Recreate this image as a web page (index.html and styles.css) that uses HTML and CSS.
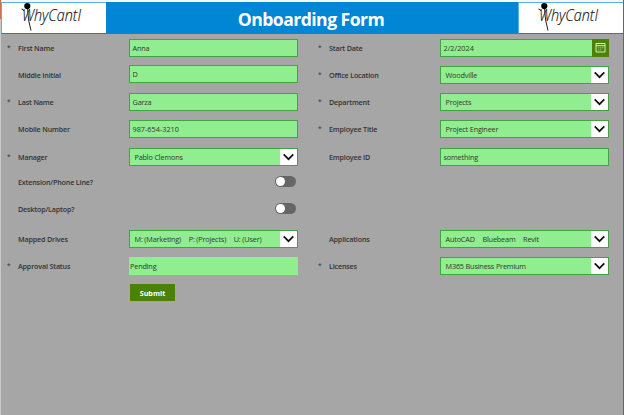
FILE: index.html
```html
<!DOCTYPE html>
<html lang="en">
<head>
<meta charset="utf-8">
<title>Onboarding Form</title>
<link rel="stylesheet" href="styles.css">
</head>
<body>
<svg width="0" height="0" class="defs" aria-hidden="true">
  <symbol id="chevron" viewBox="0 0 16 16"><path d="M3.2 5.4 8 10.2l4.8-4.8" fill="none" stroke="#111" stroke-width="1.7"/></symbol>
  <symbol id="logo" viewBox="0 0 104 30" overflow="visible">
    <circle cx="25.3" cy="3.1" r="3.1" fill="#000"/>
    <path d="M25.6 6Q25.8 17 29 27.6M19.5 6q2 .3 2.6 2" fill="none" stroke="#222" stroke-width="1"/>
    <text x="20" y="18.2" font-size="16.5" textLength="59" lengthAdjust="spacingAndGlyphs" class="wordmark">WhyCantI</text>
  </symbol>
</svg>
<header class="header">
  <div class="brand"><svg width="104" height="30"><use href="#logo"/></svg></div>
  <h1 class="title">Onboarding Form</h1>
  <div class="brand"><svg width="104" height="30"><use href="#logo"/></svg></div>
</header>
<form class="form">
  <div class="column">
    <div class="row"><span class="star">*</span><label>First Name</label><div class="field">Anna</div></div>
    <div class="row raised"><span class="star"></span><label>Middle Initial</label><div class="field">D</div></div>
    <div class="row"><span class="star">*</span><label>Last Name</label><div class="field">Garza</div></div>
    <div class="row"><span class="star"></span><label>Mobile Number</label><div class="field digits">987-654-3210</div></div>
    <div class="row"><span class="star">*</span><label>Manager</label><div class="field select"><span>Pablo Clemons</span><i><svg><use href="#chevron"/></svg></i></div></div>
    <div class="row"><span class="star"></span><label>Extension/Phone Line?</label><div class="toggle"></div></div>
    <div class="row"><span class="star"></span><label>Desktop/Laptop?</label><div class="toggle"></div></div>
    <div class="row"><span class="star"></span><label>Mapped Drives</label><div class="field select"><span>M: (Marketing)</span><span>P: (Projects)</span><span>U: (User)</span><i><svg><use href="#chevron"/></svg></i></div></div>
    <div class="row"><span class="star">*</span><label>Approval Status</label><div class="field plain">Pending</div></div>
    <div class="row"><span class="star"></span><label></label><button type="button" class="submit">Submit</button></div>
  </div>
  <div class="column">
    <div class="row"><span class="star">*</span><label>Start Date</label><div class="field date digits"><span>2/2/2024</span><b><svg viewBox="0 0 17 16"><path d="M4 4h9v8.5H4zM4 6.2h9" fill="none" stroke="#dcebc9" stroke-width="1"/><path d="M6 8.3h5.5M6 10.3h4" stroke="#a5c383" stroke-width="1" stroke-dasharray="1.4 .6"/></svg></b></div></div>
    <div class="row"><span class="star">*</span><label>Office Location</label><div class="field select"><span>Woodville</span><i><svg><use href="#chevron"/></svg></i></div></div>
    <div class="row"><span class="star">*</span><label>Department</label><div class="field select"><span>Projects</span><i><svg><use href="#chevron"/></svg></i></div></div>
    <div class="row"><span class="star">*</span><label>Employee Title</label><div class="field select"><span>Project Engineer</span><i><svg><use href="#chevron"/></svg></i></div></div>
    <div class="row"><span class="star"></span><label>Employee ID</label><div class="field">something</div></div>
    <div class="row empty"></div>
    <div class="row empty"></div>
    <div class="row"><span class="star"></span><label>Applications</label><div class="field select"><span>AutoCAD</span><span>Bluebeam</span><span>Revit</span><i><svg><use href="#chevron"/></svg></i></div></div>
    <div class="row"><span class="star">*</span><label>Licenses</label><div class="field select"><span>M365 Business Premium</span><i><svg><use href="#chevron"/></svg></i></div></div>
  </div>
</form>
</body>
</html>
```
FILE: styles.css
```css
* { box-sizing: border-box; }
body {
  margin: 0;
  width: 624px;
  height: 415px;
  overflow: hidden;
  background: #a6a6a6;
  border-left: 1px solid;
  border-image: linear-gradient(#c9744a 20px, #c9c9c9 20px) 1;
  box-shadow: inset -1px 0 #666;
  font-family: "Open Sans", "Noto Sans", sans-serif;
  font-size: 7.3px;
  letter-spacing: -.18px;
  color: #333;
}
.defs { position: absolute; }
.header {
  display: flex;
  height: 34px;
  margin-right: 1px;
  border-top: 2px solid #f4f8fb;
  background: #0086d4;
}
.brand {
  width: 105px;
  height: 32px;
  background: #fff;
  border-top: 1px solid #58b0e3;
  border-left: 1px solid #58b0e3;
  border-bottom: 1px solid #0086d4;
}
.brand svg { display: block; overflow: visible; }
.wordmark {
  font-family: "Open Sans", sans-serif;
  font-style: italic;
  font-weight: 300;
  letter-spacing: 0;
  fill: #111;
  stroke: #111;
  stroke-width: .15px;
}
.title {
  flex: 1;
  margin: 0;
  text-align: center;
  font-size: 17.6px;
  letter-spacing: -.55px;
  line-height: 34px;
  font-weight: 700;
  color: #fff;
  padding-right: 2px;
}
.form {
  display: grid;
  grid-template-columns: 311px 311px;
  padding-top: 5px;
}
.column {
  display: grid;
  grid-template-rows: 27px 27px 27px 28px 25px 27px 30px 27px 27px 18px;
}
.row {
  display: grid;
  grid-template-columns: 11px 111px 168.5px;
  align-items: center;
  height: 17.5px;
  padding-left: 6px;
}
.star { line-height: 17px; font-size: 6.5px; }
label { font-weight: 600; white-space: nowrap; font-size: 7.2px; }
.field {
  display: flex;
  align-items: center;
  height: 17.5px;
  padding-left: 2.5px;
  border: 1px solid #41a341;
  background: #90ee90;
  white-space: nowrap;
}
.digits { letter-spacing: 0; }
.raised .field { margin-top: -2px; }
.select { padding-left: 4.5px; gap: 7.6px; }
.select i {
  width: 17px;
  height: 16px;
  margin-left: auto;
  background: #fff;
}
.select svg { display: block; width: 17px; height: 16px; }
.date b {
  width: 17px;
  height: 17.5px;
  margin: -1px -1px -1px auto;
  background: #498205;
}
.date svg { display: block; width: 17px; height: 17px; }
.plain { padding-left: 1px; border-color: #90ee90; border-left: 0; }
.toggle {
  justify-self: end;
  width: 21px;
  height: 11px;
  margin-right: 1.5px;
  padding: 1px;
  border-radius: 6px;
  background: #666;
}
.toggle::before {
  content: "";
  display: block;
  width: 9px;
  height: 9px;
  border-radius: 50%;
  background: #fff;
}
.submit {
  width: 45px;
  height: 17px;
  margin-left: 1px;
  padding: 0;
  border: 0;
  background: #498205;
  color: #fff;
  font: 700 7.2px "Open Sans", sans-serif;
}
```
